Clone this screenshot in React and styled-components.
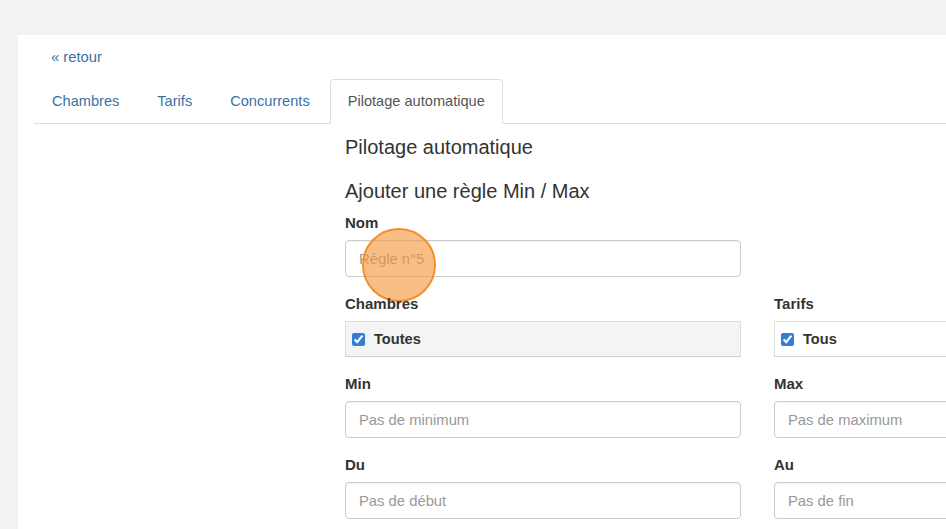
import React from 'react';
import styled, { createGlobalStyle } from 'styled-components';

const GlobalStyle = createGlobalStyle`
    html, body {
        margin: 0;
        padding: 0;
        background: #f2f2f2;
        overflow: hidden;
        font-family: "Liberation Sans", Arial, sans-serif;
        color: #333;
    }
`;

const Page = styled.div`
    padding: 35px 0 0 18px;
    height: 529px;
    box-sizing: border-box;
`;

const Panel = styled.div`
    background: white;
    width: 1300px;
    height: 100%;
    padding: 12px 0 0 16px;
    box-sizing: border-box;
`;

const BackLink = styled.a`
    display: inline-block;
    margin-left: 17px;
    font-size: 14.8px;
    line-height: 21px;
    color: #3a72a4;
    text-decoration: none;
`;

const Tabs = styled.ul`
    display: flex;
    list-style: none;
    margin: 11px 0 0;
    padding: 0;
    border-bottom: 1px solid #ddd;
`;

const Tab = styled.li`
    margin: 0 2px -1px 0;
    padding: 11px 17px;
    font-size: 14.6px;
    line-height: 21px;
    border: 1px solid ${p => (p.active ? '#ddd' : 'transparent')};
    border-bottom-color: ${p => (p.active ? 'white' : 'transparent')};
    border-radius: 4px 4px 0 0;
    background: ${p => (p.active ? 'white' : 'transparent')};
    color: ${p => (p.active ? '#555' : '#3a72a4')};
`;

const Content = styled.div`
    padding-left: 311px;
`;

const Title = styled.h3`
    margin: 12px 0 0;
    font-size: 20px;
    font-weight: normal;
    line-height: 22px;
    color: #333;
`;

const SubTitle = styled(Title)`
    margin-top: 22px;
`;

const Form = styled.div`
    margin-top: 10px;
    display: grid;
    grid-template-columns: 396px 396px;
    column-gap: 33px;
`;

const Group = styled.div`
    margin-bottom: 16px;
    position: relative;
`;

const Label = styled.label`
    display: block;
    margin-bottom: 7px;
    font-size: 15px;
    line-height: 21px;
    font-weight: bold;
    color: #333;
`;

const Input = styled.input`
    display: block;
    width: 100%;
    height: 37px;
    box-sizing: border-box;
    padding: 0 13px;
    border: 1px solid #ccc;
    border-radius: 4px;
    box-shadow: inset 0 1px 1px rgba(0, 0, 0, 0.06);
    font-family: "Liberation Sans", Arial, sans-serif;
    font-size: 14.8px;
    color: #555;
    &::placeholder {
        color: #999;
    }
`;

const CheckBox = styled.label`
    display: flex;
    align-items: center;
    height: 36px;
    box-sizing: border-box;
    padding: 0 6px;
    border: 1px solid #ddd;
    border-bottom-color: #d0d0d0;
    background: ${p => (p.muted ? '#f4f4f4' : 'white')};
    font-size: 14.6px;
    font-weight: bold;
    color: #333;

    input {
        width: 13px;
        height: 13px;
        margin: 0 9px 0 0;
        accent-color: #2f7fd8;
    }
`;

const ClickMark = styled.div`
    position: absolute;
    left: 17px;
    top: 16px;
    width: 70px;
    height: 70px;
    border-radius: 50%;
    border: 2.5px solid #f28f2c;
    background: rgba(246, 150, 60, 0.62);
    pointer-events: none;
`;

const App = () => (
    <>
        <GlobalStyle />
        <Page>
            <Panel>
                <BackLink href="#">« retour</BackLink>
                <Tabs>
                    <Tab>Chambres</Tab>
                    <Tab>Tarifs</Tab>
                    <Tab>Concurrents</Tab>
                    <Tab active>Pilotage automatique</Tab>
                </Tabs>
                <Content>
                    <Title>Pilotage automatique</Title>
                    <SubTitle>Ajouter une règle Min / Max</SubTitle>
                    <Form>
                        <Group>
                            <Label>Nom</Label>
                            <Input placeholder="Règle n°5" />
                            <ClickMark />
                        </Group>
                        <div />
                        <Group>
                            <Label>Chambres</Label>
                            <CheckBox muted>
                                <input type="checkbox" defaultChecked /> Toutes
                            </CheckBox>
                        </Group>
                        <Group>
                            <Label>Tarifs</Label>
                            <CheckBox>
                                <input type="checkbox" defaultChecked /> Tous
                            </CheckBox>
                        </Group>
                        <Group>
                            <Label>Min</Label>
                            <Input placeholder="Pas de minimum" />
                        </Group>
                        <Group>
                            <Label>Max</Label>
                            <Input placeholder="Pas de maximum" />
                        </Group>
                        <Group>
                            <Label>Du</Label>
                            <Input placeholder="Pas de début" />
                        </Group>
                        <Group>
                            <Label>Au</Label>
                            <Input placeholder="Pas de fin" />
                        </Group>
                    </Form>
                </Content>
            </Panel>
        </Page>
    </>
);

export default App;
